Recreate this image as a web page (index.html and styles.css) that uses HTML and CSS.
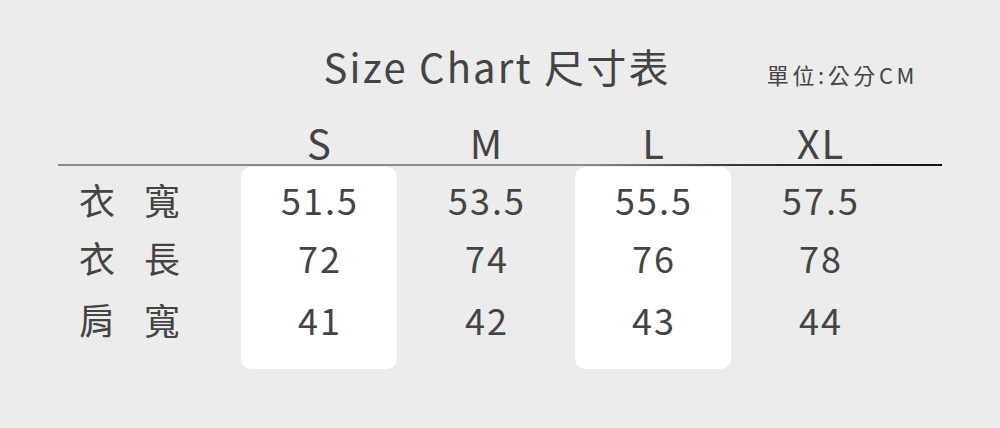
FILE: index.html
```html
<!DOCTYPE html>
<html lang="zh-Hant">
<head>
<meta charset="utf-8">
<title>Size Chart 尺寸表</title>
<link rel="stylesheet" href="styles.css">
</head>
<body>
<main class="page">
  <header class="title-row">
    <div class="spacer"></div>
    <h1 class="title">Size Chart 尺寸表</h1>
    <div class="unit">單位:公分CM</div>
  </header>
  <section class="chart">
    <div class="hl hl-s"></div>
    <div class="hl hl-l"></div>

    <div class="head c1"></div>
    <div class="head c2">S</div>
    <div class="head c3">M</div>
    <div class="head c4">L</div>
    <div class="head c5">XL</div>

    <div class="rule"></div>

    <div class="label r1">衣寬</div>
    <div class="cell r1 c2">51.5</div>
    <div class="cell r1 c3">53.5</div>
    <div class="cell r1 c4">55.5</div>
    <div class="cell r1 c5">57.5</div>

    <div class="label r2">衣長</div>
    <div class="cell r2 c2">72</div>
    <div class="cell r2 c3">74</div>
    <div class="cell r2 c4">76</div>
    <div class="cell r2 c5">78</div>

    <div class="label r3">肩寬</div>
    <div class="cell r3 c2">41</div>
    <div class="cell r3 c3">42</div>
    <div class="cell r3 c4">43</div>
    <div class="cell r3 c5">44</div>
  </section>
</main>
</body>
</html>
```

FILE: styles.css
```css
html, body {
  margin: 0;
  padding: 0;
  background: #ececec;
}

body {
  width: 1000px;
  height: 428px;
  overflow: hidden;
  font-family: "Noto Sans CJK TC", "Noto Sans", sans-serif;
  color: #444444;
}

.page {
  padding: 42px 58px 0 58px;
}

.title-row {
  display: grid;
  grid-template-columns: 1fr auto 1fr;
  align-items: baseline;
  height: 78px;
}

.title {
  margin: 0 6px 0 0;
  font-size: 40px;
  font-weight: 400;
  line-height: 48px;
  letter-spacing: 2.2px;
}

.unit {
  justify-self: end;
  padding-right: 24px;
  font-size: 22px;
  letter-spacing: 3.6px;
  position: relative;
  top: 1px;
}

.chart {
  display: grid;
  grid-template-columns: 172px 156px 156px 156px 156px 1fr;
  column-gap: 11px;
  grid-template-rows: 44px 3px 60px 60px 82px;
}

.chart > .head.c1 { grid-column: 1; }
.c2 { grid-column: 2; }
.c3 { grid-column: 3; }
.c4 { grid-column: 4; }
.c5 { grid-column: 5; }

.head {
  grid-row: 1;
  text-align: center;
  font-size: 40px;
  line-height: 44px;
  letter-spacing: 2px;
  text-indent: 2px;
}

.rule {
  grid-row: 2;
  grid-column: 1 / -1;
  height: 2px;
  background: linear-gradient(to right, #8a8a8a 0%, #8a8a8a 60%, #333 78%, #111 100%);
}

.hl {
  grid-row: 3 / 6;
  background: #ffffff;
  border-radius: 10px;
}

.hl-s { grid-column: 2; }
.hl-l { grid-column: 4; }

.r1 { grid-row: 3; }
.r2 { grid-row: 4; }
.r3 { grid-row: 5; }

.cell, .label {
  font-size: 36px;
  line-height: 60px;
  height: 60px;
  position: relative;
}

.cell {
  text-align: center;
  letter-spacing: 2px;
  text-indent: 2px;
}

.r1.cell, .r1.label { top: 2px; }
.r3.cell, .r3.label { top: 2px; }

.label {
  grid-column: 1;
  padding-left: 21px;
  letter-spacing: 29px;
}
```
